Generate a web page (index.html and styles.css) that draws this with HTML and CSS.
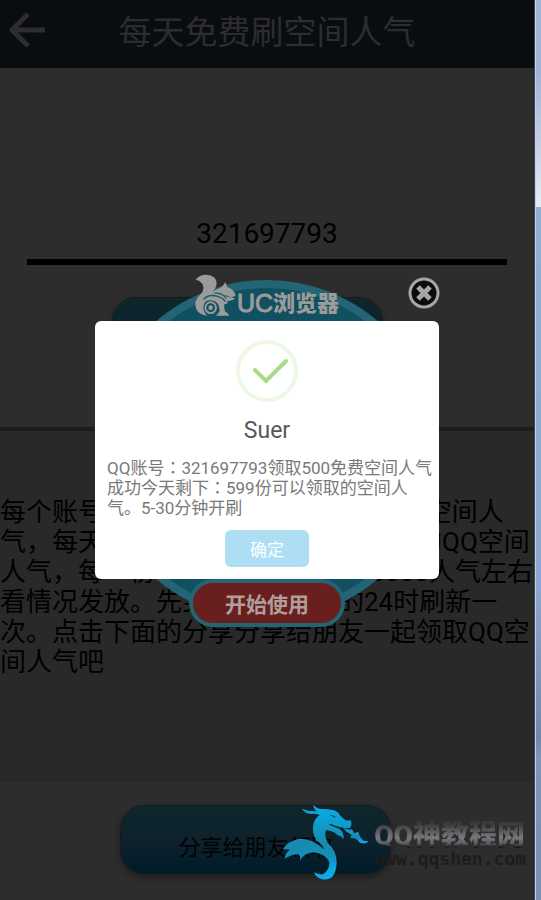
FILE: index.html
```html
<!DOCTYPE html>
<html lang="zh-CN">
	<head>
		<meta charset="utf-8">
		<meta name="viewport" content="width=device-width, initial-scale=1">
		<title>每天免费刷空间人气</title>
		<link rel="stylesheet" href="styles.css">
	</head>
	<body>
		<div class="screen">
			<header class="topbar">
				<a class="back" href="#" aria-label="返回">
					<svg width="38" height="38" viewBox="0 0 38 38"><path d="M20 3 L4 19 L20 35 M4 19 H37"/></svg>
				</a>
				<h1>每天免费刷空间人气</h1>
			</header>

			<form class="account">
				<input class="account-input" type="text" value="321697793" aria-label="QQ账号">
				<button class="btn" type="button" aria-label="领取"></button>
			</form>

			<section class="notice">
				<p>每个账号每天都可以免费领取一份QQ空间人气，每天都会更新一次所有账号领取的QQ空间人气，每一份可领取大概1000至5000人气左右看情况发放。先到先得每日晚的24时刷新一次。点击下面的分享分享给朋友一起领取QQ空间人气吧</p>
			</section>

			<section class="share">
				<button class="btn" type="button">分享给朋友领取</button>
			</section>

			<!-- popups -->
			<div class="overlay">
				<div class="promo">
					<div class="promo-logo">
						<svg width="42" height="42" viewBox="46 25 126 126">
							<path class="fur" d="M48 42 Q60 26 82 27 Q111 30 111 53 Q110 68 98 80 Q106 73 119 68 Q132 61 136 49 Q141 57 143 64 Q163 71 168 88 Q164 96 151 94 Q143 88 132 89 Q148 97 167 98 Q158 108 142 106 Q149 114 134 116 Q132 128 137 139 Q147 142 148 150 H108 Q116 144 120 135 Q119 105 92 104 Q71 105 71 126 Q72 142 84 150 Q48 147 47 116 Q46 101 64 84 Q76 71 68 54 Q60 44 48 42 Z"/>
							<circle class="haunch" cx="93" cy="126" r="16"/>
							<circle class="fur" cx="93" cy="126" r="7"/>
							<path class="cut" d="M72 101 Q86 84 114 92 Q132 98 137 108 M104 83 Q126 80 140 98"/>
						</svg>
						<span class="promo-uc">UC</span><span class="promo-name">浏览器</span>
					</div>
					<button class="promo-start" type="button">开始使用</button>
					<button class="promo-close" type="button" aria-label="关闭">
						<svg width="32" height="32" viewBox="0 0 32 32">
							<circle cx="16" cy="16" r="14"/>
							<path d="M10 10 L22 22 M22 10 L10 22"/>
						</svg>
					</button>
				</div>

				<div class="alert" role="dialog" aria-labelledby="alert-title">
					<svg class="alert-icon" width="64" height="64" viewBox="0 0 64 64">
						<circle cx="32" cy="32" r="29"/>
						<path d="M20 31 L31 42 L51 22"/>
					</svg>
					<h2 id="alert-title">Suer</h2>
					<p>QQ账号<span lang="zh-TW">：</span>321697793领取500免费空间人气成功今天剩下<span lang="zh-TW">：</span>599份可以领取的空间人气。5-30分钟开刷</p>
					<button class="alert-ok" type="button">确定</button>
				</div>
			</div>

			<!-- site watermark -->
			<div class="watermark">
				<svg width="90" height="90" viewBox="0 0 270 270">
					<defs>
						<linearGradient id="dragon" x1="0" y1="0" x2="0" y2="1">
							<stop offset="0" stop-color="#08aeea"/>
							<stop offset="0.5" stop-color="#188aae"/>
							<stop offset="0.7" stop-color="#148fba"/>
							<stop offset="0.85" stop-color="#08a9e4"/>
							<stop offset="1" stop-color="#08aeea"/>
						</linearGradient>
					</defs>
					<path fill="url(#dragon)" d="M100 30 Q108 39 122 42 Q140 41 162 46 Q176 51 179 60 Q189 71 199 77 Q206 74 213 77 Q217 88 209 100 Q185 101 153 87 L146 87 Q157 95 178 101 Q193 112 191 133 Q184 123 173 121 Q165 110 149 107 L138 105 Q132 121 143 143 Q171 169 170 202 Q169 232 156 247 Q142 257 124 252 Q108 248 102 232 Q117 240 129 238 Q147 227 148 205 Q146 188 126 179 Q104 168 82 176 Q66 183 60 197 Q62 184 56 178 Q35 178 14 191 Q15 174 30 164 L8 162 Q26 138 55 132 Q92 128 132 163 Q130 150 110 137 Q95 115 100 88 Q104 70 119 60 Q106 55 94 57 Q73 54 66 41 Q86 50 111 49 Q101 43 100 30 Z"/>
					<path fill="url(#dragon)" d="M189 99 Q204 105 210 104 L216 103 L222 115 L235 110 Q238 126 251 137 L266 139 Q259 149 240 143 Q231 131 222 130 L211 128 L215 120 Q202 115 189 99 Z"/>
					<path fill="#0b3442" d="M150 60 Q159 67 168 68 Q161 58 150 60 Z"/>
				</svg>
				<div class="watermark-text">
					<strong>QQ神教程网</strong>
					<span>www.qqshen.com</span>
				</div>
			</div>
		</div>
		<div class="desktop-edge"></div>
	</body>
</html>
```

FILE: styles.css
```css
html {
  box-sizing: border-box;
  font-family: Roboto, "Noto Sans CJK SC", sans-serif;
}

*, *:before, *:after {
  box-sizing: inherit;
}

body {
  margin: 0;
  display: flex;
  min-height: 100vh;
  background: #2d2d2d;
}

h1, h2, p {
  margin: 0;
  font-weight: 400;
}

button, input {
  font-family: inherit;
  padding: 0;
  border: 0;
}

button {
  cursor: pointer;
}

svg {
  display: block;
}

.screen {
  position: relative;
  flex: 1;
  min-width: 0;
  display: flex;
  flex-direction: column;
}

/* strip of the desktop next to the window */
.desktop-edge {
  width: 7px;
  border-left: 1px solid #3c4450;
  box-shadow: inset 1px 0 #c3d3e8;
  background: linear-gradient(#9db6da, #9fb4d6 8%, #c3d0e4 16%, #e8edf4 23%, #90aed6 23%, #8ba8d0 65%, #7089aa 82%, #7c95b8 84%, #7890b2);
}

.topbar {
  display: grid;
  grid-template-columns: 48px 1fr 48px;
  align-items: center;
  height: 68px;
  padding-bottom: 8px;
  background: #090c11;
  color: #2d2d2d;
}

.topbar h1 {
  padding-top: 6px;
  font-size: 33px;
  line-height: 48px;
  text-align: center;
}

.back {
  padding-left: 8px;
}

.back path {
  fill: none;
  stroke: #2d2d2d;
  stroke-width: 5;
}

.account {
  display: flex;
  flex-direction: column;
  align-items: center;
  gap: 32px;
  padding: 139px 27px 61px;
  border-bottom: 4px solid #1c1c1c;
}

.account .btn {
  margin-right: 40px;
}

.account-input {
  width: 100%;
  height: 58px;
  border-bottom: 6px solid #000;
  border-radius: 0;
  background: transparent;
  color: #000;
  font-size: 28px;
  text-align: center;
  outline: none;
}

.btn {
  width: 271px;
  height: 69px;
  padding-top: 10px;
  border: 1px solid #151b1d;
  border-radius: 24px;
  background: linear-gradient(#0f262c, #0d222d 50%, #001b29);
  box-shadow: 0 3px 6px rgba(0,0,0,0.4);
  color: #020202;
  font-size: 22px;
}

.notice {
  padding: 66px 0 103px;
  border-bottom: 1px solid #262626;
  background: #292929;
  color: #000;
}

.notice p {
  font-size: 26px;
  line-height: 30px;
}

.share {
  display: flex;
  justify-content: center;
  padding: 24px 23px 26px 0;
}

.overlay {
  position: absolute;
  inset: 0;
  display: grid;
  place-items: center;
}

.promo, .alert {
  grid-area: 1 / 1;
}

.promo {
  position: relative;
  display: flex;
  flex-direction: column;
  align-items: center;
  justify-content: space-between;
  width: 340px;
  height: 340px;
  border: 8px solid #236475;
  border-radius: 50%;
  background: #115060;
}

.promo-logo {
  display: flex;
  align-items: flex-end;
  margin-top: -14px;
  color: #9b9b9b;
}

.promo-logo .fur {
  fill: #9b9b9b;
}

.promo-logo .haunch {
  fill: none;
  stroke: #9b9b9b;
  stroke-width: 6;
}

.promo-logo .cut {
  fill: none;
  stroke: #1a5969;
  stroke-width: 4;
}

.promo-uc {
  font-family: "Liberation Sans", sans-serif;
  font-size: 25px;
  line-height: 26px;
  -webkit-text-stroke: 1px #9b9b9b;
}

.promo-name {
  font-size: 22px;
  line-height: 24px;
  font-weight: 900;
}

.promo-start {
  width: 156px;
  height: 48px;
  margin-bottom: -15px;
  border: 4px solid #236475;
  border-radius: 24px;
  background: #681f1d;
  color: #b09e9e;
  font-size: 21px;
  font-weight: 700;
}

.promo-close {
  position: absolute;
  top: -11px;
  right: -11px;
  background: none;
}

.promo-close circle {
  fill: #0b0b0b;
  stroke: #a6a6a6;
  stroke-width: 3;
}

.promo-close path {
  stroke: #a6a6a6;
  stroke-width: 5;
}

.alert {
  position: relative;
  display: flex;
  flex-direction: column;
  align-items: center;
  width: 344px;
  padding: 18px 0 12px;
  border-radius: 6px;
  background: #fff;
}

.alert-icon {
  fill: none;
}

.alert-icon circle {
  stroke: #edf8e7;
  stroke-width: 4;
}

.alert-icon path {
  stroke: #a5dc86;
  stroke-width: 4;
  stroke-linecap: round;
}

.alert h2 {
  margin: 12px 0 11px;
  color: #575757;
  font-size: 23px;
  line-height: 32px;
}

.alert p {
  width: 100%;
  padding: 0 4px 0 12px;
  color: #797979;
  font-size: 17px;
  line-height: 20px;
}

.alert-ok {
  width: 84px;
  height: 37px;
  margin-top: 12px;
  border-radius: 6px;
  background: #aedef4;
  color: #fff;
  font-size: 17px;
}

.watermark {
  position: absolute;
  right: 8px;
  bottom: 15px;
  display: flex;
  align-items: center;
  pointer-events: none;
}

.watermark-text {
  display: flex;
  flex-direction: column;
  padding: 8px 0 0 4px;
}

.watermark strong {
  font-size: 28px;
  line-height: 30px;
  font-weight: 900;
  background: linear-gradient(#3a3a3c 10%, #77777c 55%, #5c5c60 75%, #0c0c0d 90%);
  -webkit-background-clip: text;
  background-clip: text;
  color: transparent;
}

.watermark span {
  color: #1c1c1c;
  font-family: "DejaVu Sans Mono", monospace;
  font-size: 18px;
  line-height: 16px;
  font-weight: 700;
}
```
